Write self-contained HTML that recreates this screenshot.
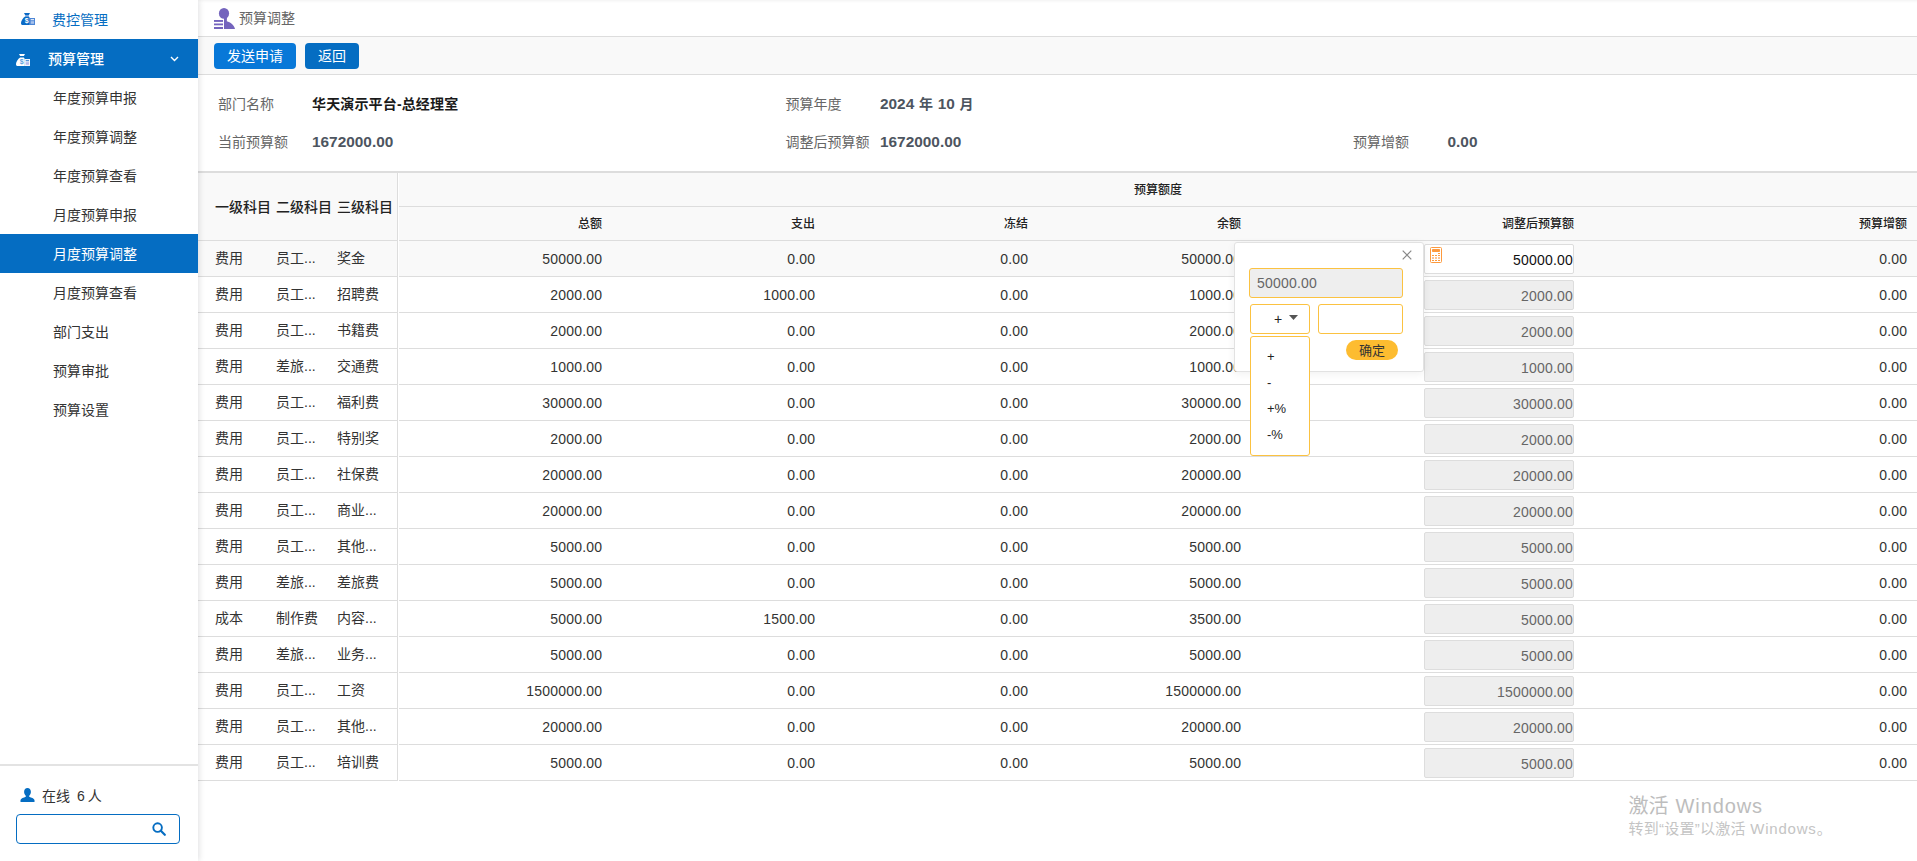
<!DOCTYPE html>
<html lang="zh-CN">
<head>
<meta charset="utf-8">
<title>预算调整</title>
<style>
*{box-sizing:border-box;margin:0;padding:0}
html,body{width:1917px;height:861px;overflow:hidden;background:#fff}
body{font-family:"Liberation Sans","Noto Sans CJK SC",sans-serif;font-size:14px;color:#333;position:relative}
ul{list-style:none}
/* ---------- sidebar ---------- */
.side{position:absolute;left:0;top:0;width:198px;height:861px;background:#fff;z-index:5;box-shadow:1px 0 6px rgba(0,0,20,.13)}
.m1{position:absolute;left:0;top:0;width:198px;height:39px;line-height:41px;color:#056dc2;padding-left:52px;font-size:14px}
.m2{position:absolute;left:0;top:39px;width:198px;height:39px;line-height:41px;color:#fff;background:#056dc2;padding-left:48px;font-size:14px;font-weight:500}
.m1 svg,.m2 svg{position:absolute}
.sub{position:absolute;left:0;top:78px;width:198px}
.sub li{height:39px;line-height:41px;padding-left:53px;font-size:14px;color:#333}
.sub li.on{background:#056dc2;color:#fff}
.sfoot{position:absolute;left:0;top:764px;width:198px;height:97px;border-top:2px solid #e3e3e3}
.online{position:absolute;left:42px;top:20px;line-height:20px;font-size:14px;color:#333}
.sfoot svg.u{position:absolute;left:20px;top:22px}
.search{position:absolute;left:16px;top:48px;width:164px;height:30px;border:1px solid #056dc2;border-radius:4px;background:#fff}
.search svg{position:absolute;right:13px;top:7px}
/* ---------- main ---------- */
.main{position:absolute;left:198px;top:0;width:1719px;height:861px;background:#fff;box-shadow:inset 0 3px 3px -2px rgba(0,0,0,.06)}
.title{position:absolute;left:0;top:0;width:1719px;height:37px;border-bottom:1px solid #ddd;line-height:36px;padding-left:41px;color:#666;font-size:14px}
.title svg{position:absolute;left:16px;top:8px}
.tool{position:absolute;left:0;top:37px;width:1719px;height:38px;border-bottom:1px solid #ddd;background:#f9f9f9}
.btn{position:absolute;top:6px;height:26px;line-height:26px;border-radius:4px;color:#fff;font-size:14px;text-align:center}
.b1{left:16px;width:82px;background:#0878d8}
.b2{left:107px;width:54px;background:#056dc2}
.info{position:absolute;left:0;top:75px;width:1719px;height:96px}
.info .l,.info .v{position:absolute;line-height:20px;font-size:14px;white-space:nowrap}
.info .l{color:#666}
.info .v{font-weight:bold;color:#4d5560;font-size:14px;word-spacing:.8px}
.info .v i{font-style:normal;font-size:15.400px}
.info .v.k{color:#1a1a1a;font-size:14px;letter-spacing:.15px}
/* ---------- table ---------- */
.lhead{position:absolute;left:0;top:171px;width:200px;height:70px;background:#f9f9f9;border-top:2px solid #ddd;border-bottom:1px solid #ddd;border-right:1px solid #ddd;font-weight:500;font-size:14px;color:#222;line-height:68px;white-space:nowrap}
.lhead span{position:absolute;top:0}
.rhead{position:absolute;left:201px;top:171px;width:1518px;height:70px;background:#f9f9f9;border-top:2px solid #ddd;border-bottom:1px solid #ddd;font-weight:500;font-size:12px;color:#222}
.rhead .g{position:absolute;left:0;top:0;width:1518px;height:34px;line-height:35px;text-align:center;border-bottom:1px solid #ddd}
.rhead .h{position:absolute;top:34px;height:34px;line-height:34px;text-align:right;white-space:nowrap}
.lbody{position:absolute;left:0;top:241px;width:200px;border-right:1px solid #ddd}
.lr{position:relative;height:36px;border-bottom:1px solid #ddd;line-height:35px;font-size:14px;color:#333;white-space:nowrap}
.lr span{position:absolute;top:0}
.c1{left:17px}.c2{left:78px}.c3{left:139px}
.hov{background:#f9f9f9}
.rbody{position:absolute;left:201px;top:241px;width:1518px}
.rr{position:relative;height:36px;border-bottom:1px solid #ddd;line-height:35px;font-size:14px;color:#333}
.n{position:absolute;top:1px;text-align:right;white-space:nowrap;letter-spacing:.2px}
.n1{right:1314.8px}.n2{right:1101.8px}.n3{right:888.8px}.n4{right:675.8px}.n6{right:9.8px}
.n5{left:1025px;width:150px;top:3px;height:30px;letter-spacing:0}
.inp{display:block;width:150px;height:30px;border:1px solid #ddd;border-radius:2px;background:#eee;color:#666;line-height:30px;padding-right:0;text-align:right;position:relative}
.inp b{font-weight:normal;letter-spacing:.2px}
.inp.act{background:#fff;color:#111}
.calc{position:absolute;left:5px;top:2px;width:12px;height:16px}
/* ---------- popup ---------- */
.pop{position:absolute;left:1036px;top:242px;width:190px;height:130px;background:#fff;border:1px solid #e2e2e2;border-radius:3px;box-shadow:0 2px 8px rgba(0,0,0,.06)}
.pop .x{position:absolute;left:167px;top:7px}
.pi{position:absolute;border:1px solid #fbc241;border-radius:3px;background:#fff}
.pi1{left:14px;top:25px;width:154px;height:30px;background:#eee;color:#666;line-height:29px;padding-left:7px;font-size:14px;letter-spacing:.2px}
.pi2{left:15px;top:61px;width:60px;height:30px}
.pi3{left:83px;top:61px;width:85px;height:30px}
.ok{position:absolute;left:111px;top:97px;width:52px;height:20px;border-radius:10px;background:#fdbc30;color:#333;font-size:13px;line-height:22px;text-align:center}
.dd{position:absolute;left:1052px;top:336px;width:60px;height:120px;border:1px solid #fbc241;border-radius:3px;background:#fff;font-size:13px;color:#222}
.dd div{position:absolute;left:16px;line-height:26px;height:26px}
/* ---------- watermark ---------- */
.wm1{position:absolute;left:1430.500px;top:791.500px;font-size:20px;line-height:28px;color:#bdbdbd;white-space:nowrap}
.wm2{position:absolute;left:1430.500px;top:819px;font-size:15px;line-height:20px;color:#c4c4c4;white-space:nowrap}

.tline{position:absolute;left:0;top:171px;width:1719px;height:2px;background:#ddd}

</style>
</head>
<body>
<div class="side">
<div class="m1"><svg style="left:21px;top:13px" width="14" height="12" viewBox="0 0 14 12"><path fill="#0a6ac6" d="M3 0h6l-1.100 2H4.100z"/><path fill="#7fa6dc" d="M4.200 2h3.600v1.500H4.200z"/><path fill="#0a6ac6" d="M4.100 3.500h3.800c.5.500.9 1.300.9 2.300V12H1.600C.6 12 0 11.200 0 10.200 0 7.600 2 5 4.100 3.500z"/><text x="3.700" y="10.300" font-family="Liberation Sans,sans-serif" font-size="7" font-weight="bold" fill="#fff">$</text><rect x="8.700" y="5" width="5.300" height="7" fill="#4d86d6"/><rect x="9.700" y="6.200" width="3.300" height="1" fill="#fff"/><rect x="9.700" y="8.200" width="3.300" height="2.600" fill="#a9c3ec"/></svg>费控管理</div>
<div class="m2"><svg style="left:16px;top:53.500px;top:14.500px" width="14" height="12" viewBox="0 0 14 12"><path fill="#fff" d="M3 0h6l-1.100 2H4.100z"/><path fill="#fff" d="M4.100 3.500h3.800c.5.500.9 1.300.9 2.300V12H1.600C.6 12 0 11.200 0 10.200 0 7.600 2 5 4.100 3.500z"/><text x="3.700" y="10.300" font-family="Liberation Sans,sans-serif" font-size="7" font-weight="bold" fill="#5aa0dd">$</text><rect x="8.700" y="5" width="5.300" height="7" fill="#f1f4fb"/><rect x="9.700" y="6.200" width="3.300" height="1" fill="#2f7fd0"/><rect x="9.700" y="8.200" width="3.300" height="2.600" fill="#b3b9ea"/></svg>预算管理<svg style="left:170px;top:17px" width="9" height="6" viewBox="0 0 9 6"><path d="M1 1l3.500 3.500L8 1" fill="none" stroke="#fff" stroke-width="1.400"/></svg></div>
<ul class="sub">
<li>年度预算申报</li>
<li>年度预算调整</li>
<li>年度预算查看</li>
<li>月度预算申报</li>
<li class="on">月度预算调整</li>
<li>月度预算查看</li>
<li>部门支出</li>
<li>预算审批</li>
<li>预算设置</li>
</ul>
<div class="sfoot">
<svg class="u" width="15" height="14" viewBox="0 0 15 14"><path fill="#056dc2" d="M7.500 0c2 0 3.400 1.600 3.400 3.800 0 1.600-.7 3.100-1.700 3.900v1c2.100.8 5 1.700 5.300 3.200V14H.5v-2.100C.8 10.400 3.700 9.500 5.800 8.700v-1C4.800 6.900 4.100 5.400 4.100 3.800 4.100 1.600 5.500 0 7.500 0z"/></svg>
<div class="online">在线 <span style="margin:0 3px 0 3px">6</span>人</div>
<div class="search"><svg width="14" height="14" viewBox="0 0 14 14"><circle cx="5.600" cy="5.600" r="4.300" fill="none" stroke="#056dc2" stroke-width="1.900"/><path d="M8.800 8.800l4 4" stroke="#056dc2" stroke-width="2.200" stroke-linecap="round"/></svg></div>
</div>
</div>
<div class="main">
<div class="title"><svg width="21" height="21" viewBox="0 0 21 21"><ellipse cx="10" cy="5.400" rx="5.100" ry="5.400" fill="#7464bd"/><path fill="#7464bd" d="M10 9h3l-.2 4.200c3.600 1.200 7.400 3.500 8.200 7.800H10z"/><rect x="0" y="12" width="9" height="1.900" fill="#7464bd"/><rect x="0" y="15.500" width="9" height="1.800" fill="#7464bd"/><rect x="0" y="19" width="9" height="2" fill="#7464bd"/></svg>预算调整</div>
<div class="tool"><div class="btn b1">发送申请</div><div class="btn b2">返回</div></div>
<div class="info">
<span class="l" style="left:20px;top:19px">部门名称</span><span class="v k" style="left:114px;top:19px">华天演示平台-总经理室</span>
<span class="l" style="left:587.500px;top:19px">预算年度</span><span class="v" style="left:682px;top:19px"><i>2024</i> 年 <i>10</i> 月</span>
<span class="l" style="left:20px;top:57px">当前预算额</span><span class="v" style="left:114px;top:57px"><i>1672000.00</i></span>
<span class="l" style="left:587.500px;top:57px">调整后预算额</span><span class="v" style="left:682px;top:57px"><i>1672000.00</i></span>
<span class="l" style="left:1155px;top:57px">预算增额</span><span class="v" style="left:1249.500px;top:57px"><i>0.00</i></span>
</div>
<div class="lhead"><span class="c1">一级科目</span><span class="c2">二级科目</span><span class="c3">三级科目</span></div>
<div class="rhead"><div class="g">预算额度</div>
<div class="h" style="right:1315px">总额</div><div class="h" style="right:1102px">支出</div><div class="h" style="right:889px">冻结</div><div class="h" style="right:676px">余额</div><div class="h" style="right:343px">调整后预算额</div><div class="h" style="right:10px">预算增额</div></div>
<div class="lbody">
<div class="lr hov"><span class="c1">费用</span><span class="c2">员工...</span><span class="c3">奖金</span></div>
<div class="lr"><span class="c1">费用</span><span class="c2">员工...</span><span class="c3">招聘费</span></div>
<div class="lr"><span class="c1">费用</span><span class="c2">员工...</span><span class="c3">书籍费</span></div>
<div class="lr"><span class="c1">费用</span><span class="c2">差旅...</span><span class="c3">交通费</span></div>
<div class="lr"><span class="c1">费用</span><span class="c2">员工...</span><span class="c3">福利费</span></div>
<div class="lr"><span class="c1">费用</span><span class="c2">员工...</span><span class="c3">特别奖</span></div>
<div class="lr"><span class="c1">费用</span><span class="c2">员工...</span><span class="c3">社保费</span></div>
<div class="lr"><span class="c1">费用</span><span class="c2">员工...</span><span class="c3">商业...</span></div>
<div class="lr"><span class="c1">费用</span><span class="c2">员工...</span><span class="c3">其他...</span></div>
<div class="lr"><span class="c1">费用</span><span class="c2">差旅...</span><span class="c3">差旅费</span></div>
<div class="lr"><span class="c1">成本</span><span class="c2">制作费</span><span class="c3">内容...</span></div>
<div class="lr"><span class="c1">费用</span><span class="c2">差旅...</span><span class="c3">业务...</span></div>
<div class="lr"><span class="c1">费用</span><span class="c2">员工...</span><span class="c3">工资</span></div>
<div class="lr"><span class="c1">费用</span><span class="c2">员工...</span><span class="c3">其他...</span></div>
<div class="lr"><span class="c1">费用</span><span class="c2">员工...</span><span class="c3">培训费</span></div>
</div>
<div class="rbody">
<div class="rr hov"><span class="n n1">50000.00</span><span class="n n2">0.00</span><span class="n n3">0.00</span><span class="n n4">50000.00</span><span class="n n5"><span class="inp act"><svg class="calc" viewBox="0 0 12 16"><rect x=".5" y=".5" width="11" height="15" rx="1" fill="#fff" stroke="#fd9a3e"/><rect x="2" y="2" width="8" height="3" rx=".8" fill="#fd9a3e"/><g fill="#fd9a3e"><rect x="8" y="6" width="2" height="1"/><rect x="2" y="8" width="2" height="1"/><rect x="5" y="8" width="2" height="1"/><rect x="8" y="8" width="2" height="1"/><rect x="2" y="13" width="2" height="1"/><rect x="5" y="13" width="2" height="1"/><rect x="8" y="13" width="2" height="1"/></g><g fill="#fdc492"><rect x="2" y="10" width="2" height="2"/><rect x="5" y="10" width="2" height="2"/><rect x="8" y="10" width="2" height="2"/></g></svg><b>50000.00</b></span></span><span class="n n6">0.00</span></div>
<div class="rr"><span class="n n1">2000.00</span><span class="n n2">1000.00</span><span class="n n3">0.00</span><span class="n n4">1000.00</span><span class="n n5"><span class="inp"><b>2000.00</b></span></span><span class="n n6">0.00</span></div>
<div class="rr"><span class="n n1">2000.00</span><span class="n n2">0.00</span><span class="n n3">0.00</span><span class="n n4">2000.00</span><span class="n n5"><span class="inp"><b>2000.00</b></span></span><span class="n n6">0.00</span></div>
<div class="rr"><span class="n n1">1000.00</span><span class="n n2">0.00</span><span class="n n3">0.00</span><span class="n n4">1000.00</span><span class="n n5"><span class="inp"><b>1000.00</b></span></span><span class="n n6">0.00</span></div>
<div class="rr"><span class="n n1">30000.00</span><span class="n n2">0.00</span><span class="n n3">0.00</span><span class="n n4">30000.00</span><span class="n n5"><span class="inp"><b>30000.00</b></span></span><span class="n n6">0.00</span></div>
<div class="rr"><span class="n n1">2000.00</span><span class="n n2">0.00</span><span class="n n3">0.00</span><span class="n n4">2000.00</span><span class="n n5"><span class="inp"><b>2000.00</b></span></span><span class="n n6">0.00</span></div>
<div class="rr"><span class="n n1">20000.00</span><span class="n n2">0.00</span><span class="n n3">0.00</span><span class="n n4">20000.00</span><span class="n n5"><span class="inp"><b>20000.00</b></span></span><span class="n n6">0.00</span></div>
<div class="rr"><span class="n n1">20000.00</span><span class="n n2">0.00</span><span class="n n3">0.00</span><span class="n n4">20000.00</span><span class="n n5"><span class="inp"><b>20000.00</b></span></span><span class="n n6">0.00</span></div>
<div class="rr"><span class="n n1">5000.00</span><span class="n n2">0.00</span><span class="n n3">0.00</span><span class="n n4">5000.00</span><span class="n n5"><span class="inp"><b>5000.00</b></span></span><span class="n n6">0.00</span></div>
<div class="rr"><span class="n n1">5000.00</span><span class="n n2">0.00</span><span class="n n3">0.00</span><span class="n n4">5000.00</span><span class="n n5"><span class="inp"><b>5000.00</b></span></span><span class="n n6">0.00</span></div>
<div class="rr"><span class="n n1">5000.00</span><span class="n n2">1500.00</span><span class="n n3">0.00</span><span class="n n4">3500.00</span><span class="n n5"><span class="inp"><b>5000.00</b></span></span><span class="n n6">0.00</span></div>
<div class="rr"><span class="n n1">5000.00</span><span class="n n2">0.00</span><span class="n n3">0.00</span><span class="n n4">5000.00</span><span class="n n5"><span class="inp"><b>5000.00</b></span></span><span class="n n6">0.00</span></div>
<div class="rr"><span class="n n1">1500000.00</span><span class="n n2">0.00</span><span class="n n3">0.00</span><span class="n n4">1500000.00</span><span class="n n5"><span class="inp"><b>1500000.00</b></span></span><span class="n n6">0.00</span></div>
<div class="rr"><span class="n n1">20000.00</span><span class="n n2">0.00</span><span class="n n3">0.00</span><span class="n n4">20000.00</span><span class="n n5"><span class="inp"><b>20000.00</b></span></span><span class="n n6">0.00</span></div>
<div class="rr"><span class="n n1">5000.00</span><span class="n n2">0.00</span><span class="n n3">0.00</span><span class="n n4">5000.00</span><span class="n n5"><span class="inp"><b>5000.00</b></span></span><span class="n n6">0.00</span></div>
</div>
<div class="tline"></div>
<div class="pop">
<svg class="x" width="10" height="10" viewBox="0 0 10 10"><path d="M.7.7l8.600 8.600M9.300.7L.7 9.300" stroke="#888" stroke-width="1.200" fill="none"/></svg>
<div class="pi pi1">50000.00</div>
<div class="pi pi2"><span style="position:absolute;left:23px;top:0;line-height:29px;font-size:14px;color:#222">+</span><svg style="position:absolute;left:38px;top:10px" width="9" height="5" viewBox="0 0 9 5"><path d="M0 0h9L4.500 5z" fill="#555"/></svg></div>
<div class="pi pi3"></div>
<div class="ok">确定</div>
</div>
<div class="dd"><div style="top:7px">+</div><div style="top:33px">-</div><div style="top:59px">+%</div><div style="top:85px">-%</div></div>
<div class="wm1">激活 <span style="letter-spacing:.9px;margin-left:1.5px">Windows</span></div>
<div class="wm2"><span style="letter-spacing:.25px">转到“设置”以激活 </span><span style="letter-spacing:.8px">Windows</span>。</div>
</div>
</body>
</html>
